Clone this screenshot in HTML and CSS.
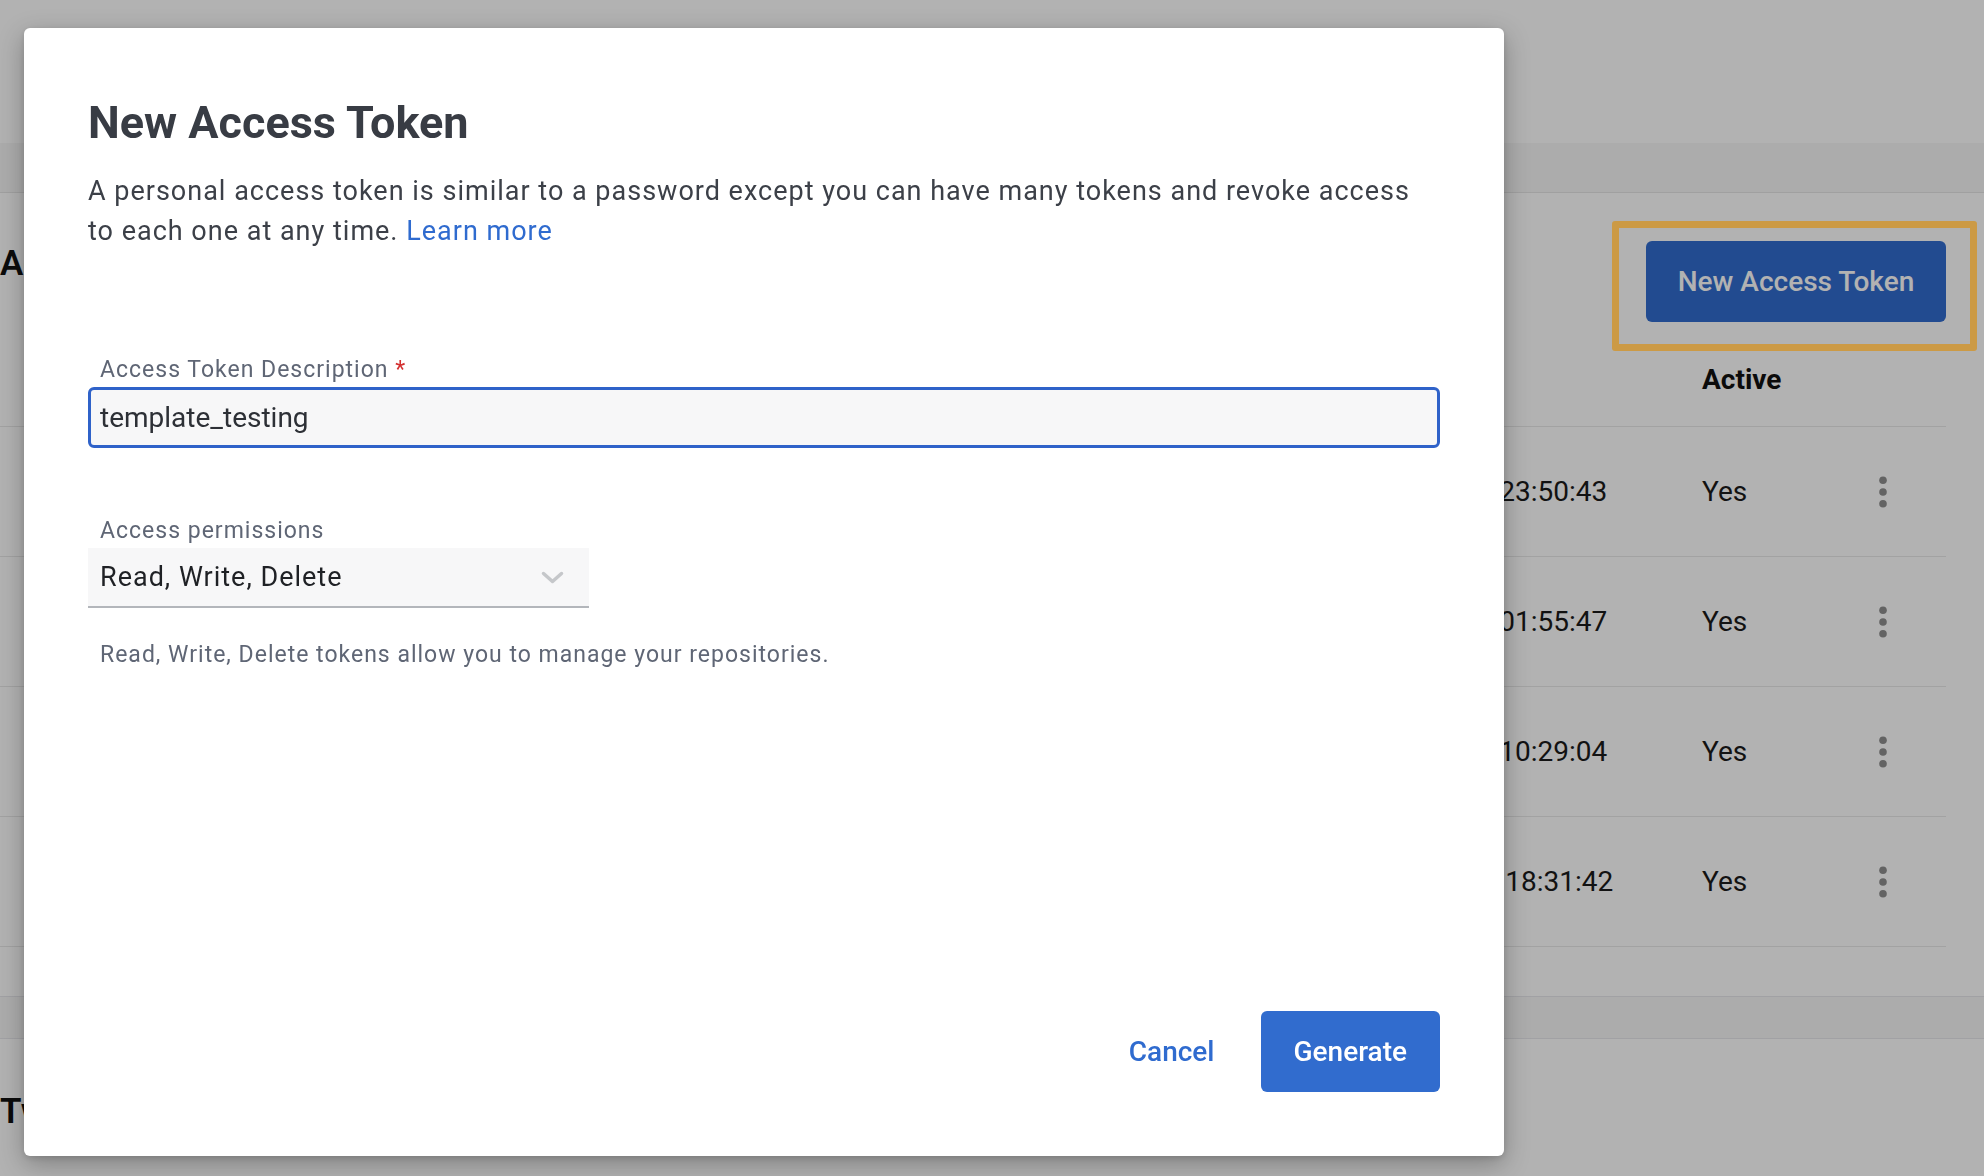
FILE: index.html
```html
<!DOCTYPE html>
<html lang="en">
<head>
<meta charset="utf-8">
<title>Access Tokens – New Access Token</title>
<link rel="stylesheet" href="styles.css">
</head>
<body>
<div class="page">
  <header class="topbar"></header>
  <nav class="subnav"></nav>
  <main class="content">
    <section class="tokens">
      <div class="section-head">
        <h2 class="section-title">Access Tokens</h2>
        <button class="btn btn-primary page-btn">New Access Token</button>
      </div>
      <div class="table">
        <div class="tr th"><span class="name">Description</span><span>Last Used</span><span>Active</span><span></span></div>
        <div class="tr">
          <span class="name">ci-pipeline</span><span class="time">2023-08-14 23:50:43</span><span>Yes</span>
          <span class="kebab"><svg width="8" height="32" viewBox="0 0 8 32"><circle cx="4" cy="4.3" r="3.8"/><circle cx="4" cy="16" r="3.8"/><circle cx="4" cy="27.7" r="3.8"/></svg></span>
        </div>
        <div class="tr">
          <span class="name">local-dev</span><span class="time">2023-08-02 01:55:47</span><span>Yes</span>
          <span class="kebab"><svg width="8" height="32" viewBox="0 0 8 32"><circle cx="4" cy="4.3" r="3.8"/><circle cx="4" cy="16" r="3.8"/><circle cx="4" cy="27.7" r="3.8"/></svg></span>
        </div>
        <div class="tr">
          <span class="name">build-server</span><span class="time">2023-07-21 10:29:04</span><span>Yes</span>
          <span class="kebab"><svg width="8" height="32" viewBox="0 0 8 32"><circle cx="4" cy="4.3" r="3.8"/><circle cx="4" cy="16" r="3.8"/><circle cx="4" cy="27.7" r="3.8"/></svg></span>
        </div>
        <div class="tr">
          <span class="name">deploy-bot</span><span class="time time-late">2023-07-09 18:31:42</span><span>Yes</span>
          <span class="kebab"><svg width="8" height="32" viewBox="0 0 8 32"><circle cx="4" cy="4.3" r="3.8"/><circle cx="4" cy="16" r="3.8"/><circle cx="4" cy="27.7" r="3.8"/></svg></span>
        </div>
      </div>
    </section>
    <div class="band"></div>
    <section class="twofa">
      <h2 class="section-title">Two-Factor Authentication</h2>
    </section>
  </main>
</div>

<div class="scrim"></div>
<div class="annotation"></div>

<div class="modal" role="dialog" aria-labelledby="modal-title">
  <h1 class="modal-title" id="modal-title">New Access Token</h1>
  <p class="modal-desc">A personal access token is similar to a password except you can have many tokens and revoke access to each one at any time. <a class="link" href="#">Learn more</a></p>

  <div class="form">
    <div class="field">
      <label class="field-label" for="desc">Access Token Description <span class="req">*</span></label>
      <input class="text-input" id="desc" type="text" value="template_testing">
    </div>
    <div class="field field-perms">
      <span class="field-label">Access permissions</span>
      <div class="select">
        <span>Read, Write, Delete</span>
        <svg class="chev" width="23" height="13" viewBox="0 0 23 13"><path d="M2.5 2.5 L11.5 10.5 L20.5 2.5"/></svg>
      </div>
      <p class="helper">Read, Write, Delete tokens allow you to manage your repositories.</p>
    </div>
  </div>

  <div class="actions">
    <button class="btn btn-text">Cancel</button>
    <button class="btn btn-primary">Generate</button>
  </div>
</div>
</body>
</html>
```

FILE: styles.css
```css
* { box-sizing: border-box; }

html, body { margin: 0; }

body {
  width: 1984px;
  height: 1176px;
  overflow: hidden;
  position: relative;
  background: #fff;
  font-family: Roboto, "Liberation Sans", Arial, sans-serif;
}

/* ---------- underlying page ---------- */
.topbar { height: 143px; background: #fff; }
.subnav { height: 50px; background: #f6f6f6; border-bottom: 1px solid #e5e5e5; }

.content { padding-right: 38px; }

.section-head {
  display: flex;
  justify-content: space-between;
  align-items: flex-start;
  padding-top: 48px;
}

.section-title {
  margin: 0;
  font-size: 35px;
  line-height: 46px;
  font-weight: 600;
  color: #111;
}

.btn {
  font-family: inherit;
  border: 0;
  height: 81px;
  padding: 0 33px;
  font-size: 28px;
  font-weight: 500;
  border-radius: 6px;
  cursor: pointer;
}

.btn-primary { background: #316cce; color: #fff; }
.btn-text { background: transparent; color: #2f6bcf; }

.page-btn { font-size: 28px; padding: 0; width: 300px; }

.table { margin-top: 30px; }

.tr {
  display: grid;
  grid-template-columns: 1fr 351px 118px 126px;
  align-items: center;
  height: 130px;
  border-bottom: 1px solid #e9e9e9;
  font-size: 28px;
  color: #1a1a1a;
}

.tr.th {
  height: auto;
  padding: 10px 0 28px;
  line-height: 36px;
  font-weight: 700;
  color: #111;
}

.name { padding-left: 40px; }

.time-late { padding-left: 6px; }

.kebab { display: flex; justify-content: center; }
.kebab svg { fill: #8f8f8f; }

.band {
  margin-top: 49px;
  margin-right: -38px;
  height: 43px;
  background: #f7f7f7;
  border-top: 1px solid #e7e7eb;
  border-bottom: 1px solid #e7e7eb;
}

.twofa { padding-top: 50px; }

/* ---------- overlay ---------- */
.scrim {
  position: fixed;
  inset: 0;
  background: rgba(0, 0, 0, 0.3);
}

.annotation {
  position: absolute;
  left: 1612px;
  top: 221px;
  width: 365px;
  height: 130px;
  border: 7px solid #cc9a45;
  border-radius: 3px;
}

/* ---------- modal ---------- */
.modal {
  position: absolute;
  left: 24px;
  top: 28px;
  width: 1480px;
  height: 1128px;
  background: #fff;
  border-radius: 6px;
  box-shadow: 0 8px 26px rgba(0, 0, 0, 0.28), 0 2px 6px rgba(0, 0, 0, 0.12);
  padding: 69px 64px 64px;
  display: flex;
  flex-direction: column;
}

.modal-title {
  margin: 0;
  font-size: 45px;
  line-height: 52px;
  font-weight: 700;
  color: #383c44;
}

.modal-desc {
  margin: 22px 0 0;
  max-width: 1340px;
  font-size: 27px;
  line-height: 40px;
  letter-spacing: 1px;
  color: #3c4048;
}

.link { color: #2f6bcf; text-decoration: none; }

.form { margin-top: 104px; }

.field-label {
  display: block;
  padding-left: 12px;
  margin-bottom: 2px;
  font-size: 23px;
  line-height: 30px;
  letter-spacing: 1px;
  color: #5f6675;
}

.req { color: #d32f2f; }

.text-input {
  display: block;
  width: 100%;
  height: 61px;
  border: 3px solid #2f62c9;
  border-radius: 6px;
  background: #f7f7f8;
  padding: 0 9px;
  font-family: inherit;
  font-size: 28px;
  color: #2d3036;
  outline: none;
}

.field-perms { margin-top: 68px; }

.select {
  display: flex;
  align-items: center;
  justify-content: space-between;
  width: 501px;
  height: 60px;
  background: #f7f7f8;
  border-bottom: 2px solid #b3b6bb;
  padding: 0 25px 0 12px;
  font-size: 27px;
  letter-spacing: 1px;
  color: #1f2125;
}

.chev path {
  fill: none;
  stroke: #c5c7ca;
  stroke-width: 3.5;
  stroke-linecap: round;
  stroke-linejoin: round;
}

.helper {
  margin: 32px 0 0;
  padding-left: 12px;
  font-size: 23px;
  line-height: 30px;
  letter-spacing: 1px;
  color: #5f6675;
}

.actions {
  margin-top: auto;
  display: flex;
  justify-content: flex-end;
  gap: 13px;
}
```
